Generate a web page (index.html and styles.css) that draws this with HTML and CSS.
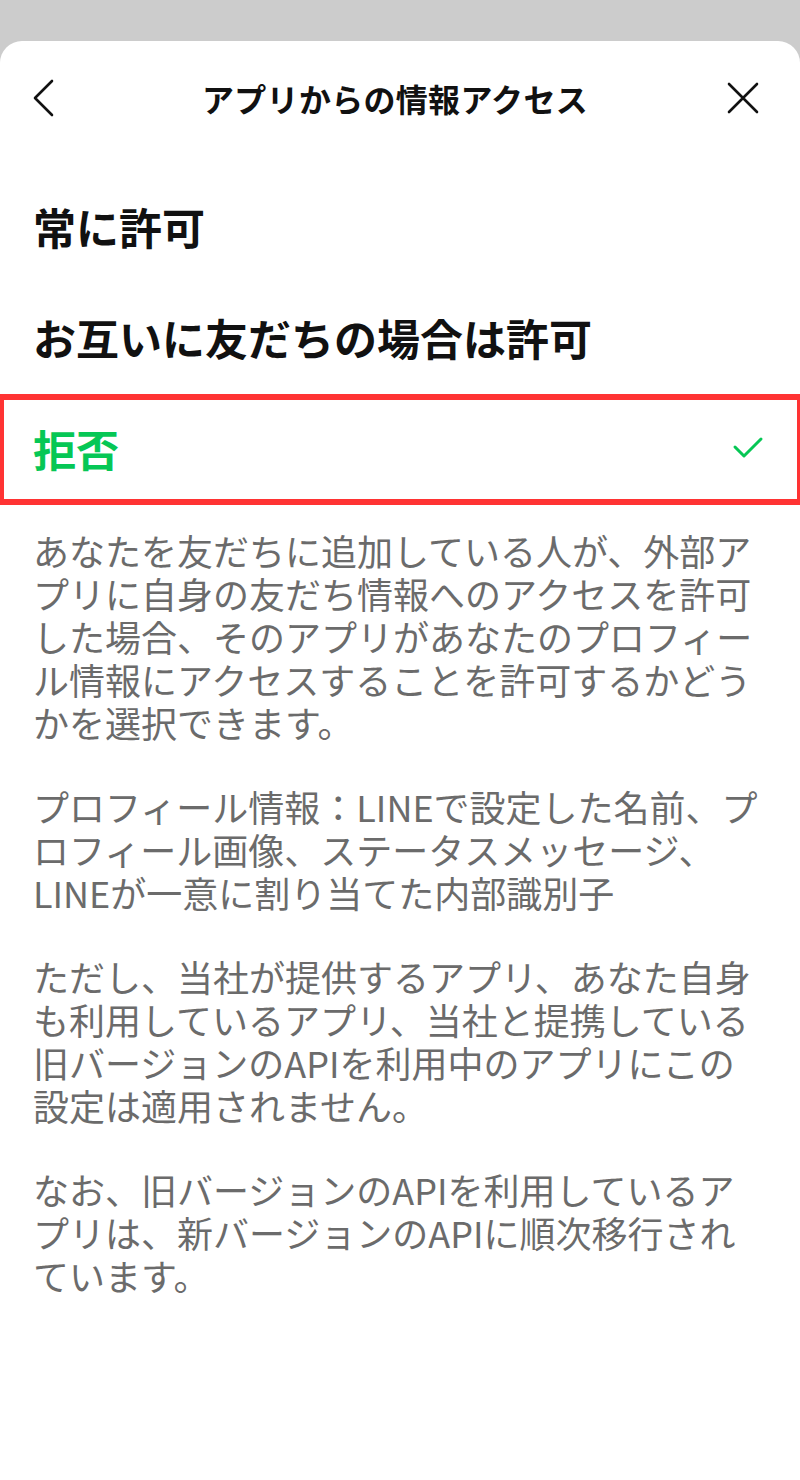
FILE: index.html
```html
<!DOCTYPE html>
<html lang="ja">
<head>
<meta charset="utf-8">
<title>アプリからの情報アクセス</title>
<link rel="stylesheet" href="styles.css">
</head>
<body>
<div class="sheet">
  <header class="header">
    <svg class="icon-back" width="30" height="40" viewBox="0 0 30 40" aria-hidden="true">
      <polyline points="22,3 5,20 22,37" fill="none" stroke="#111" stroke-width="2.6" stroke-linecap="round" stroke-linejoin="round"/>
    </svg>
    <h1 class="title">アプリからの情報アクセス</h1>
    <svg class="icon-close" width="34" height="34" viewBox="0 0 34 34" aria-hidden="true">
      <path d="M3 3 L31 31 M31 3 L3 31" fill="none" stroke="#111" stroke-width="2.6" stroke-linecap="round"/>
    </svg>
  </header>
  <ul class="options">
    <li class="option">常に許可</li>
    <li class="option">お互いに友だちの場合は許可</li>
    <li class="option selected">
      <span>拒否</span>
      <svg class="check" width="32" height="26" viewBox="0 0 32 26" aria-hidden="true">
        <polyline points="3,12 12,21 29,4" fill="none" stroke="#06c755" stroke-width="3" stroke-linecap="round" stroke-linejoin="round"/>
      </svg>
      <div class="highlight"></div>
    </li>
  </ul>
  <div class="desc">
    <p>あなたを友だちに追加している人が、外部アプリに自身の友だち情報へのアクセスを許可した場合、そのアプリがあなたのプロフィール情報にアクセスすることを許可するかどうかを選択できます。</p>
    <p>プロフィール情報：LINEで設定した名前、プロフィール画像、ステータスメッセージ、LINEが一意に割り当てた内部識別子</p>
    <p>ただし、当社が提供するアプリ、あなた自身も利用しているアプリ、当社と提携している旧バージョンのAPIを利用中のアプリにこの設定は適用されません。</p>
    <p>なお、旧バージョンのAPIを利用しているアプリは、新バージョンのAPIに順次移行されています。</p>
  </div>
</div>
</body>
</html>
```

FILE: styles.css
```css
* { box-sizing: border-box; }

html, body {
  margin: 0;
  padding: 0;
}

body {
  background: #cccccc;
  font-family: "Noto Sans CJK JP", "Noto Sans", sans-serif;
  color: #111;
  overflow: hidden;
}

.sheet {
  margin-top: 41px;
  min-height: 1439px;
  background: #fff;
  border-radius: 22px 22px 0 0;
}

.header {
  height: 114px;
  display: grid;
  grid-template-columns: 1fr auto 1fr;
  align-items: center;
  padding: 0 40px 0 30px;
}

.icon-back { display: block; justify-self: start; }
.icon-close { display: block; justify-self: end; }

.title {
  margin: 0;
  font-size: 32px;
  font-weight: 700;
  line-height: 40px;
  color: #111;
  letter-spacing: 0.3px;
}

.options {
  list-style: none;
  margin: 0;
  padding: 15px 0 0;
}

.option {
  position: relative;
  height: 111px;
  display: flex;
  align-items: center;
  justify-content: space-between;
  padding: 0 36px 0 33px;
  font-size: 43px;
  font-weight: 700;
  line-height: 50px;
  color: #111;
}

.option.selected {
  color: #06c755;
}

.check { display: block; }

.highlight {
  position: absolute;
  left: -2px;
  right: -3px;
  top: 2px;
  bottom: -2px;
  border: 6px solid #ff3333;
  pointer-events: none;
}

.desc {
  padding: 26px 37px 0 33px;
}

.desc p {
  margin: 0 0 41px;
  font-size: 36px;
  line-height: 43px;
  color: #6b6b6b;
  font-weight: 400;
}
```
